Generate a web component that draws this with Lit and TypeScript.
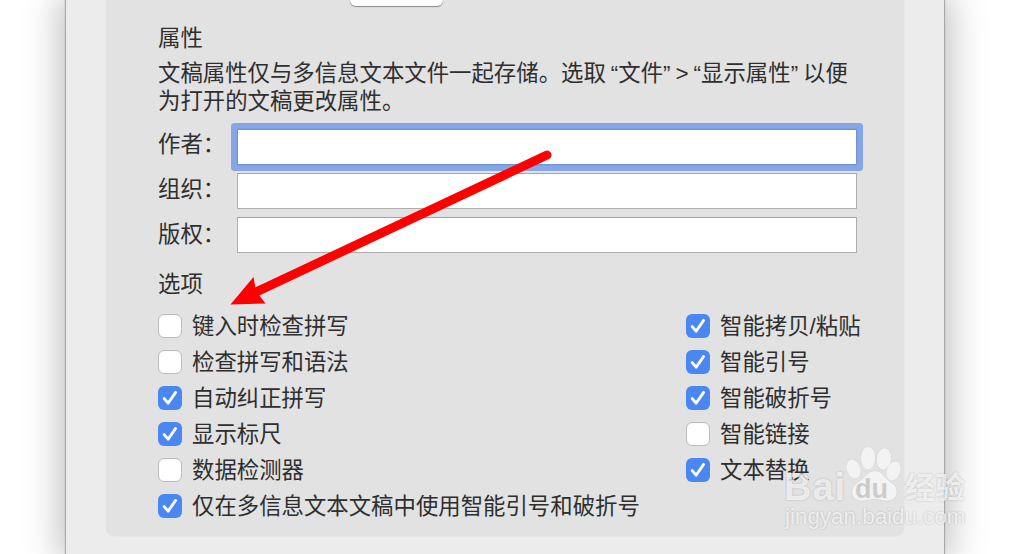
import { LitElement, html, css, svg } from "lit";
import { customElement } from "lit/decorators.js";

const LEFT: [string, boolean][] = [
  ["键入时检查拼写", false],
  ["智能拷贝/粘贴", true],
  ["检查拼写和语法", false],
  ["智能引号", true],
  ["自动纠正拼写", true],
  ["智能破折号", true],
  ["显示标尺", true],
  ["智能链接", false],
  ["数据检测器", false],
  ["文本替换", true],
];

@customElement("app-root")
export class AppRoot extends LitElement {
  static styles = css`
    :host {
      display: block;
      width: 1022px;
      height: 554px;
      overflow: hidden;
      position: relative;
      background: #fff;
      font-family: "Liberation Sans", "Noto Sans CJK SC", sans-serif;
      font-size: 22.4px;
      color: #2e2e2e;
      line-height: 28px;
    }
    .window {
      width: 878px;
      height: 554px;
      margin-left: 66px;
      box-sizing: border-box;
      padding: 0 40px;
      background: #ececec;
      box-shadow: 0 0 1px 1px #a9a9a9, 0 0 34px 6px rgba(0, 0, 0, 0.26);
    }
    .panel {
      height: 536px;
      box-sizing: border-box;
      padding: 0 0 18px 52px;
      background: #e2e2e2;
      border-radius: 0 0 8px 8px;
      box-shadow: 0 0 0 1px rgba(0, 0, 0, 0.015);
      overflow: hidden;
    }
    .clipped {
      height: 6px;
      display: flex;
      align-items: flex-end;
      padding-left: 22px;
    }
    .clipped-label {
      width: 170px;
      height: 28px;
      flex: none;
      margin-bottom: 2px;
      color: #666;
      font-size: 21px;
    }
    .clipped-btn {
      width: 93px;
      height: 26px;
      flex: none;
      background: #fff;
      border-radius: 6px;
      box-shadow: 0 1px 1px rgba(0, 0, 0, 0.4);
    }
    h2 {
      font: inherit;
      margin: 19px 0 0;
    }
    p {
      margin: 7px 0 0;
      width: 700px;
    }
    .ql {
      padding-left: 5px;
    }
    .qr {
      padding-right: 5px;
    }
    .fields {
      display: flex;
      flex-direction: column;
      gap: 8px;
      margin-top: 13px;
    }
    .field {
      display: flex;
      align-items: center;
      height: 36px;
    }
    .field span {
      width: 79px;
      flex: none;
    }
    .field:nth-child(1) span {
      padding-bottom: 4px;
    }
    .field:nth-child(2) span {
      padding-bottom: 2px;
    }
    .input {
      width: 620px;
      height: 36px;
      box-sizing: border-box;
      background: #fff;
      border: 1px solid #aeaeae;
      border-top-color: #a4a4a4;
    }
    .input.focus {
      border-color: #7094dc;
      box-shadow: 0 0 0 1px #7f9fe0, 0 0 0 6px #85a7e7;
      border-radius: 1px;
    }
    .opts-title {
      margin-top: 18px;
    }
    .grid {
      display: grid;
      grid-template-columns: 528px auto;
      row-gap: 12px;
      margin-top: 15px;
    }
    .check {
      display: flex;
      align-items: center;
      gap: 10px;
      height: 24px;
    }
    .check span {
      margin-top: 2px;
    }
    .check.wide {
      grid-column: 1 / 3;
    }
    .box {
      width: 24px;
      height: 24px;
      box-sizing: border-box;
      flex: none;
      border-radius: 6px;
      background: #fff;
      border: 1px solid #bcbcbc;
      box-shadow: inset 0 1px 1px rgba(0, 0, 0, 0.03);
    }
    .box.on {
      background: #4b87f3;
      border: none;
      box-shadow: none;
    }
    .box svg {
      display: block;
      width: 24px;
      height: 24px;
    }
    .arrow {
      position: absolute;
      left: 0;
      top: 0;
      width: 1022px;
      height: 554px;
      pointer-events: none;
    }
    .mark {
      position: absolute;
      left: 784px;
      top: 440px;
      width: 190px;
      height: 95px;
      color: rgba(255, 255, 255, 0.75);
      text-shadow: 0 0 2px rgba(0, 0, 0, 0.24);
      font-family: "Liberation Sans", sans-serif;
      pointer-events: none;
    }
    .mark svg {
      position: absolute;
      left: 60px;
      top: 4px;
      width: 60px;
      height: 62px;
    }
    .mark-bai,
    .mark-du,
    .mark-cn,
    .mark-url {
      position: absolute;
      white-space: nowrap;
    }
    .mark-bai {
      left: 0;
      top: 27px;
      font-size: 38px;
      line-height: 40px;
      font-weight: 700;
      letter-spacing: 1px;
    }
    .mark-du {
      left: 71px;
      top: 37px;
      font-size: 27px;
      line-height: 24px;
      font-weight: 700;
      color: rgba(190, 190, 190, 0.75);
      text-shadow: none;
    }
    .mark-cn {
      left: 121px;
      top: 26px;
      font-family: "Noto Sans CJK SC", sans-serif;
      font-size: 30px;
      line-height: 38px;
      font-weight: 700;
    }
    .mark-url {
      left: 1px;
      top: 63px;
      font-size: 22.4px;
      line-height: 28px;
    }
  `;

  private box(on: boolean) {
    return html`<div class="box ${on ? "on" : ""}">
      ${on
        ? html`<svg viewBox="0 0 24 24">
            <path d="M6.2 12.6l3.9 4.6L17.6 6.4" fill="none" stroke="#fff" stroke-width="2.8" stroke-linecap="round" stroke-linejoin="round" />
          </svg>`
        : ""}
    </div>`;
  }

  render() {
    return html`
      <div class="window">
        <div class="panel">
          <div class="clipped">
            <div class="clipped-label">纯文本字体：</div>
            <div class="clipped-btn"></div>
          </div>
          <h2>属性</h2>
          <p>文稿属性仅与多信息文本文件一起存储。选取<span class="ql">“</span>文件<span class="qr">”</span>&gt;<span class="ql">“</span>显示属性<span class="qr">”</span>以便为打开的文稿更改属性。</p>
          <div class="fields">
            <div class="field"><span>作者：</span><div class="input focus"></div></div>
            <div class="field"><span>组织：</span><div class="input"></div></div>
            <div class="field"><span>版权：</span><div class="input"></div></div>
          </div>
          <h2 class="opts-title">选项</h2>
          <div class="grid">
            ${LEFT.map(
              ([t, on]) => html`<div class="check">${this.box(on)}<span>${t}</span></div>`
            )}
            <div class="check wide">${this.box(true)}<span>仅在多信息文本文稿中使用智能引号和破折号</span></div>
          </div>
        </div>
      </div>
      <svg class="arrow" viewBox="0 0 1022 554">
        ${svg`<path d="M547 155L252 294" stroke="#fe0000" stroke-width="9" stroke-linecap="round" fill="none"/>
        <path d="M230.500 304.500L253.500 277L256 291L265.500 303.500Z" fill="#fe0000"/>`}
      </svg>
      <div class="mark">
        <svg viewBox="0 0 60 62">
          <g fill="rgba(255,255,255,0.6)" stroke="rgba(0,0,0,0.05)" stroke-width="1">
            <ellipse cx="24" cy="14" rx="7.500" ry="11.500" />
            <ellipse cx="40" cy="15" rx="7.500" ry="11" transform="rotate(6 40 15)" />
            <ellipse cx="9.500" cy="25" rx="7" ry="10" transform="rotate(-20 9.500 25)" />
            <ellipse cx="49.500" cy="27" rx="7" ry="10" transform="rotate(20 49.500 27)" />
            <path d="M31 27c8 0 10 8 17 12c8 5 6 18-5 18c-5 0-8-2-12-2s-8 2-13 2c-11 0-13-13-5-18c7-4 10-12 18-12z" />
          </g>
        </svg>
        <div class="mark-bai">Bai</div>
        <div class="mark-du">du</div>
        <div class="mark-cn">经验</div>
        <div class="mark-url">jingyan.baidu.com</div>
      </div>
    `;
  }
}
